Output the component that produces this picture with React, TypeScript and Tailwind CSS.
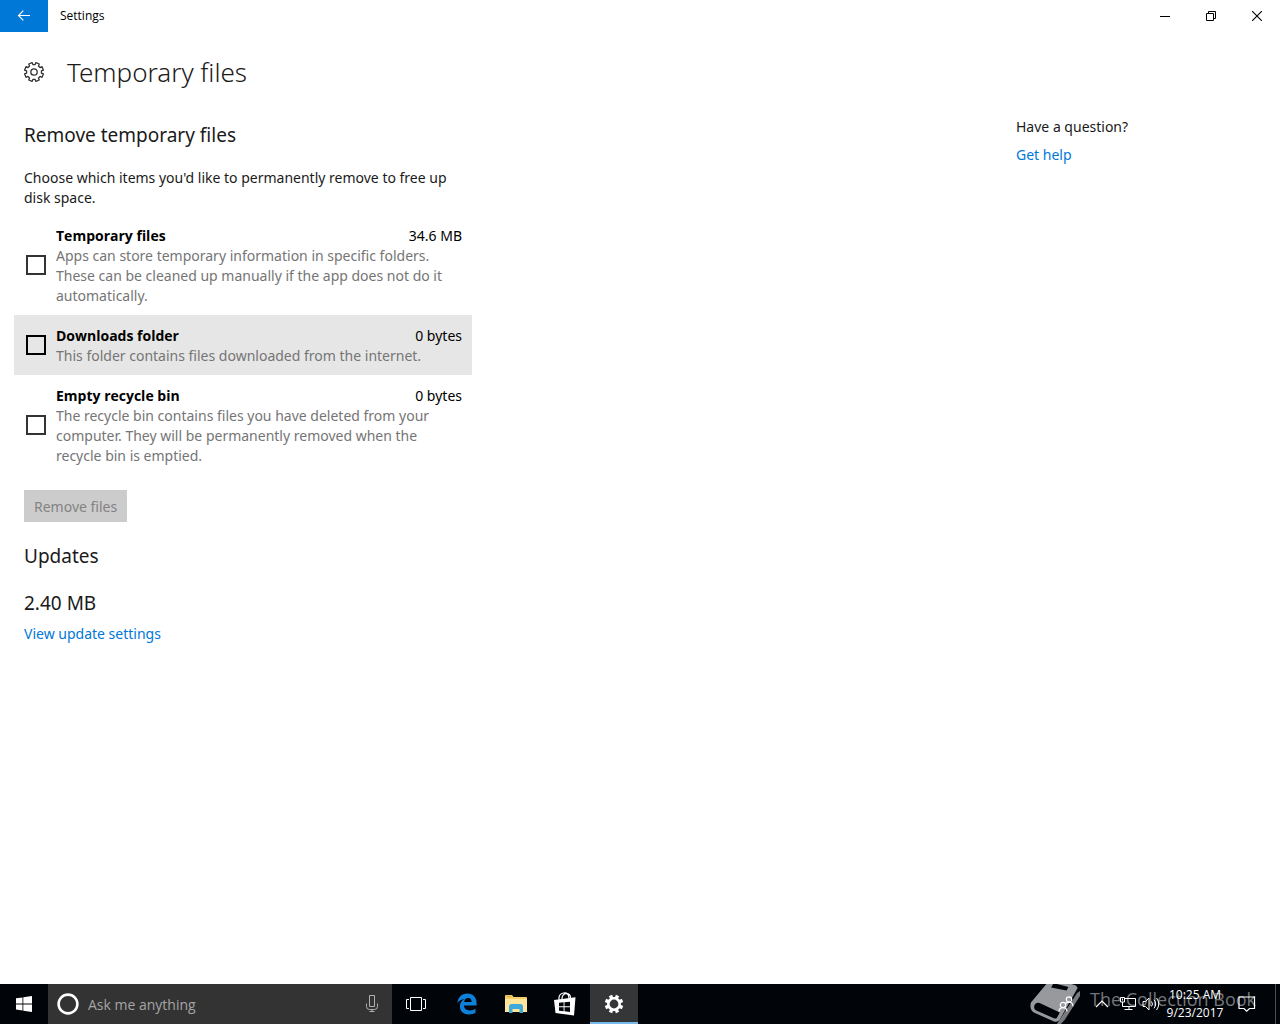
import { useState } from "react";

type CleanupItem = {
  id: string;
  name: string;
  size: string;
  description: string;
};

const items: CleanupItem[] = [
  {
    id: "temp",
    name: "Temporary files",
    size: "34.6 MB",
    description:
      "Apps can store temporary information in specific folders. These can be cleaned up manually if the app does not do it automatically.",
  },
  {
    id: "downloads",
    name: "Downloads folder",
    size: "0 bytes",
    description: "This folder contains files downloaded from the internet.",
  },
  {
    id: "recycle",
    name: "Empty recycle bin",
    size: "0 bytes",
    description:
      "The recycle bin contains files you have deleted from your computer. They will be permanently removed when the recycle bin is emptied.",
  },
];

// Eight-tooth cog outline around (cx, cy)
function cogPath(cx: number, cy: number, outer: number, inner: number) {
  const points: string[] = [];
  for (let i = 0; i < 8; i++) {
    const mid = ((i + 0.5) * Math.PI) / 4;
    const corners: [number, number][] = [
      [inner, -0.24],
      [outer, -0.19],
      [outer, 0.19],
      [inner, 0.24],
    ];
    corners.forEach(([r, a]) => {
      points.push(`${(cx + r * Math.sin(mid + a)).toFixed(2)} ${(cy - r * Math.cos(mid + a)).toFixed(2)}`);
    });
  }
  return `M${points.join("L")}Z`;
}

function TitleBar() {
  return (
    <header className="flex h-8 items-stretch text-black">
      <button aria-label="Back" className="flex w-12 items-center justify-center bg-[#0078d7] text-white">
        <svg width="14" height="12" viewBox="0 0 14 12" fill="none" stroke="currentColor" strokeWidth="1.2">
          <path d="M13 5.5H1.5M6.3 .7 1.5 5.5l4.8 4.8" />
        </svg>
      </button>
      <div className="flex-1 self-center pl-3 font-['Open_Sans',sans-serif] text-xs">Settings</div>
      <button aria-label="Minimize" className="flex w-[46px] items-center justify-center">
        <svg width="10" height="10" viewBox="0 0 10 10" fill="none" stroke="currentColor">
          <path d="M0 5.5h10" />
        </svg>
      </button>
      <button aria-label="Restore" className="flex w-[46px] items-center justify-center">
        <svg width="10" height="10" viewBox="0 0 10 10" fill="none" stroke="currentColor">
          <path d="M.5 2.5h7v7h-7zM2.5 2.5v-2h7v7h-2" />
        </svg>
      </button>
      <button aria-label="Close" className="flex w-[46px] items-center justify-center">
        <svg width="10" height="10" viewBox="0 0 10 10" fill="none" stroke="currentColor" strokeWidth="1.1">
          <path d="m0 0 10 10M10 0 0 10" />
        </svg>
      </button>
    </header>
  );
}

function CleanupRow({ item, checked, onToggle }: { item: CleanupItem; checked: boolean; onToggle: () => void }) {
  const hovered = item.id === "downloads";
  return (
    <li>
      <label htmlFor={item.id} className={`flex items-center gap-2.5 py-[9px] pl-3 pr-2.5 ${hovered ? "bg-[#e6e6e6]" : ""}`}>
        <input
          id={item.id}
          type="checkbox"
          checked={checked}
          onChange={onToggle}
          className={`h-5 w-5 shrink-0 appearance-none border-2 checked:bg-[#0078d7] ${hovered ? "border-black" : "border-[#333]"}`}
        />
        <span className="flex-1 pt-0.5">
          <span className="flex justify-between text-black">
            <span className="font-['Open_Sans',sans-serif] font-bold">{item.name}</span>
            <span>{item.size}</span>
          </span>
          <span className="block text-[#757575]">{item.description}</span>
        </span>
      </label>
    </li>
  );
}

function Watermark() {
  return (
    <div className="pointer-events-none absolute right-6 top-0 flex h-10 items-start gap-2.5 overflow-hidden">
      <svg width="50" height="40" viewBox="0 0 52 40" preserveAspectRatio="none" fill="#97999c">
        <path
          d="M17 0h26q6 1 6.500 4L31 35.500q-2 3-6 2L4 28.500Q-1 25 1 18.500zM5 20.500q-2 4 1.500 6l19 8q2 .5 3-1.500l2.500-4.500L10 19q-3.500-.8-5 1.500zM24 0l-2 3.500 16 3L40 3 28 0z"
          fillRule="evenodd"
        />
        <path d="M49 9l3-2v5L36 36l-4 4h-4z" opacity=".8" />
      </svg>
      <span className="font-['Open_Sans',sans-serif] text-lg leading-[30px] text-[#73767a]">The Collection Book</span>
    </div>
  );
}

function Taskbar() {
  return (
    <footer className="relative flex h-10 items-stretch bg-[#010409] font-['Open_Sans',sans-serif] text-white">
      <button aria-label="Start" className="flex w-12 items-center justify-center">
        <svg width="16" height="16" viewBox="0 0 16 16" fill="currentColor">
          <path d="M0 2.3 6.5 1.4v6.1H0zM7.3 1.3 16 0v7.5H7.3zM0 8.4h6.5v6.1L0 13.6zM7.3 8.4H16V16l-8.7-1.3z" />
        </svg>
      </button>
      <div className="flex w-[344px] items-center bg-[#333] pl-2 pr-3">
        <svg width="24" height="24" viewBox="0 0 24 24" fill="none">
          <circle cx="12" cy="12" r="9.4" stroke="#fff" strokeWidth="2.6" />
        </svg>
        <input
          type="text"
          aria-label="Search"
          placeholder="Ask me anything"
          className="ml-2 min-w-0 flex-1 bg-transparent pt-px text-sm outline-none placeholder:text-[#a5a5a5]"
        />
        <button aria-label="Speak">
          <svg width="16" height="18" viewBox="0 0 16 18" fill="none" stroke="#b0b0b0">
            <path d="M5.5 .5h5v11h-5zM2.500 8.500v3q0 3 3 3h5q3 0 3-3V8.500M8 14.500v2M5.500 16.500h5" />
          </svg>
        </button>
      </div>
      <button aria-label="Task view" className="flex w-12 items-center justify-center">
        <svg width="20" height="14" viewBox="0 0 20 14" fill="none" stroke="currentColor">
          <path d="M4.5 .5h11v13h-11zM3 2.5H.5v9H3M17 2.5h2.5v9H17" />
        </svg>
      </button>
      <div className="ml-[3px] flex gap-px">
        <button aria-label="Microsoft Edge" className="flex w-12 items-center justify-center">
          <svg width="20" height="22" viewBox="0 0 20 22" fill="#0d80d8">
            <path d="M.3 10C1 4.200 4.800.6 10.300.6c6 0 9.300 4.100 9.300 9.800v2.200H7c.1 3.300 2.700 4.800 5.900 4.800 2 0 3.900-.6 5.600-1.700v4.100c-1.900 1.100-4.100 1.600-6.600 1.600C6.600 21.400 2.900 18.300 2.900 13.400c0-3.100 1.700-5.900 4.800-7.300C4.700 6.400 2.100 7.500.3 10ZM7.100 8.900h7.500c0-2.300-1.100-3.800-3.400-3.800-2.200 0-3.600 1.400-4.100 3.800Z" />
          </svg>
        </button>
        <button aria-label="File Explorer" className="flex w-12 items-center justify-center">
          <svg width="22" height="18" viewBox="0 0 22 18">
            <path d="M0 1q0-1 1-1h6l1.500 2H21q1 0 1 1v13H0z" fill="#f3cf6c" />
            <path d="M1.500 1h4.700l.6 1H1.500z" fill="#d9ac3d" />
            <path d="M0 4h22v13H0z" fill="#ffe69b" />
            <path d="M4 18v-6.500Q4 9 6.500 9h9q2.500 0 2.500 2.500V18h-3.500v-4h-7v4z" fill="#40a9dc" />
          </svg>
        </button>
        <button aria-label="Store" className="flex w-12 items-center justify-center">
          <svg width="22" height="24" viewBox="0 0 22 24">
            <path d="M5 8V6q0-4 4.500-5 4-.8 5 2.500l.5 3M8 7.500V6q.5-4 4.500-4.500 4 0 4 4.500" fill="none" stroke="#fff" strokeWidth="1.200" />
            <path d="m0 8 21.500-2.700L20 23.500 1.500 21z" fill="#fff" />
            <path d="m5 10.700 4.600-.4v4H5zM10.500 10.200l5.500-.5v4.600h-5.500zM5 15.200h4.600v4L5 18.700zM10.500 15.200H16V20l-5.500-.7z" fill="#010409" />
          </svg>
        </button>
        <button aria-label="Settings" className="flex w-12 items-center justify-center border-b-2 border-[#76b9ed] bg-[#343638] pt-[2px]">
          <svg width="20" height="20" viewBox="0 0 20 20">
            <path d={`${cogPath(10, 10, 9.4, 7)}M10 5.600a4.400 4.400 0 1 0 0 8.800a4.400 4.400 0 1 0 0-8.800Z`} fill="#fff" fillRule="evenodd" />
          </svg>
        </button>
      </div>
      <Watermark />
      <div className="relative ml-auto flex">
        <button aria-label="People" className="flex w-9 items-center justify-center">
          <svg width="16" height="16" viewBox="0 0 16 16" fill="none" stroke="currentColor" strokeWidth="1.200">
            <circle cx="11" cy="3.500" r="2.700" />
            <circle cx="5" cy="9" r="2.700" />
            <path d="M1 15.500q.3-3.800 4-3.800t4 3.800M7.500 7.500Q9 6.200 11 6.200q3.700 0 4 4" />
          </svg>
        </button>
        <button aria-label="Show hidden icons" className="flex w-9 items-center justify-center">
          <svg width="14" height="8" viewBox="0 0 14 8" fill="none" stroke="currentColor" strokeWidth="1.200">
            <path d="m1 7 6-6 6 6" />
          </svg>
        </button>
        <button aria-label="Network" className="flex w-4 items-center justify-center">
          <svg width="16" height="14" viewBox="0 0 16 14" fill="none" stroke="currentColor">
            <path d="M4.500 1.500h11v8h-13V5M.5.500h4V5h-4zM2.500 1.500v2M9 9.500v3M4.500 12.500h8" />
          </svg>
        </button>
        <button aria-label="Volume" className="ml-[5px] flex w-5 items-center justify-center">
          <svg width="18" height="14" viewBox="0 0 18 14" fill="none" stroke="currentColor">
            <path d="M1 4.500h2.500L7 1v12L3.500 9.500H1zM9.500 4.500q2 2.500 0 5M12 2.700q3.400 4.300 0 8.600M14.500 1q4.500 6 0 12" />
          </svg>
        </button>
        <time className="flex w-[68px] flex-col justify-center text-center text-xs leading-[18px]">
          <span>10:25 AM</span>
          <span>9/23/2017</span>
        </time>
        <button aria-label="Action center" className="flex w-9 items-center justify-center">
          <svg width="18" height="16" viewBox="0 0 18 16" fill="none" stroke="currentColor" strokeWidth="1.200">
            <path d="M1 1h15.500v11.500h-5L8.700 15.200 6 12.500H1z" />
          </svg>
        </button>
        <div className="ml-2.5 w-[5px] border-l border-[#4a4d51]" />
      </div>
    </footer>
  );
}

export default function App() {
  const [selected, setSelected] = useState<string[]>([]);

  const toggle = (id: string) =>
    setSelected((prev) => (prev.includes(id) ? prev.filter((x) => x !== id) : [...prev, id]));

  return (
    <div className="flex min-h-screen flex-col bg-white font-['Noto_Sans',sans-serif] text-sm leading-5 text-[#1a1a1a]">
      <TitleBar />
      <div className="flex h-20 items-center gap-[23px] pl-6">
        <svg width="20" height="20" viewBox="0 0 20 20" fill="none" stroke="#333" strokeWidth="1.300" strokeLinejoin="round">
          <path d={cogPath(10, 10, 9.6, 7.5)} />
          <circle cx="10" cy="10" r="3.200" />
        </svg>
        <h1 className="text-[26px] font-light leading-9">Temporary files</h1>
      </div>
      <div className="flex flex-1 items-start justify-between">
        <main className="w-[472px] pl-6">
          <h2 className="mt-[9px] text-[19px] leading-7">Remove temporary files</h2>
          <p className="mt-[19px]">Choose which items you'd like to permanently remove to free up disk space.</p>
          <ul className="-ml-2.5 mt-[7px]">
            {items.map((item) => (
              <CleanupRow key={item.id} item={item} checked={selected.includes(item.id)} onToggle={() => toggle(item.id)} />
            ))}
          </ul>
          <button
            disabled={selected.length === 0}
            className="mt-[15px] h-8 bg-[#ccc] px-2.5 pt-px text-black disabled:text-[#838383]"
          >
            Remove files
          </button>
          <h2 className="mt-5 text-[19px] leading-7">Updates</h2>
          <p className="mt-[19px] text-[19px] leading-7">2.40 MB</p>
          <a href="#updates" className="mt-[7px] inline-block text-[#0078d7]">
            View update settings
          </a>
        </main>
        <aside className="flex w-[264px] flex-col items-start gap-2 pt-[5px]">
          <p>Have a question?</p>
          <a href="#help" className="text-[#0078d7]">
            Get help
          </a>
        </aside>
      </div>
      <Taskbar />
    </div>
  );
}
